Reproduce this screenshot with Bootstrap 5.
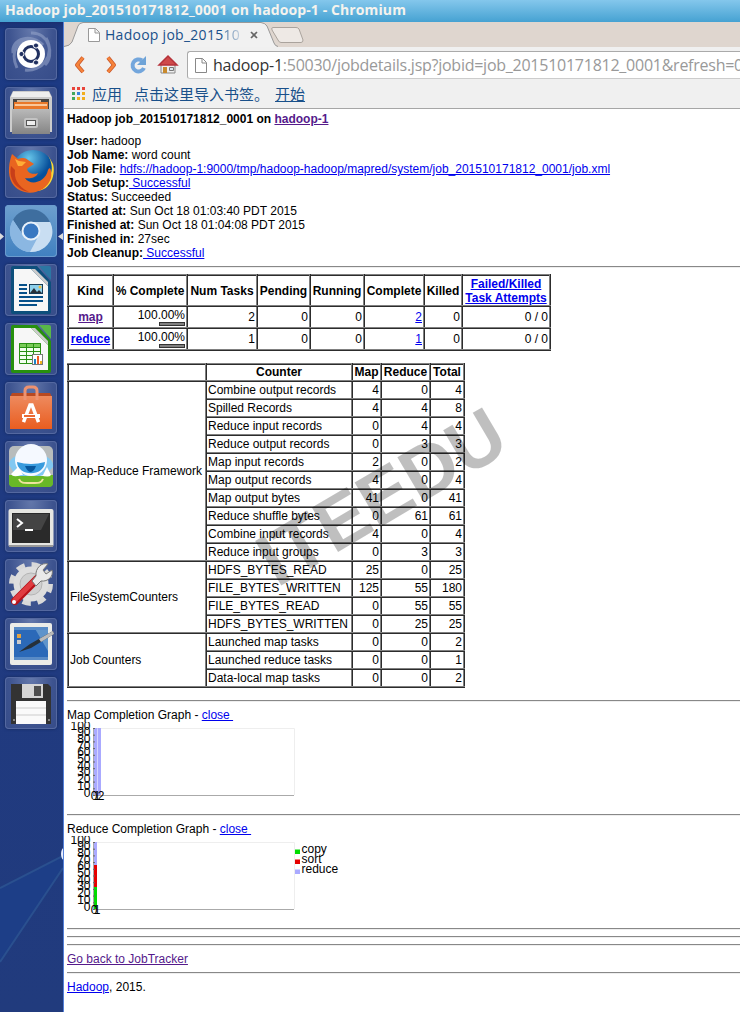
<!DOCTYPE html>
<html lang="en">
<head>
<meta charset="utf-8">
<title>Hadoop job_201510171812_0001 on hadoop-1</title>
<link href="https://cdn.jsdelivr.net/npm/bootstrap@5.3.0/dist/css/bootstrap.min.css" rel="stylesheet">
<style>
body{height:1012px;overflow:hidden;background:#fff;color:#000;font:12px/14px "Liberation Sans",Arial,sans-serif}
.titlebar{height:22px;background:linear-gradient(#84c7ec,#46a2d2);color:#f5f3ee;font:700 14px/20px "Open Sans","Noto Sans",sans-serif;padding-left:5px;white-space:nowrap}
.desktop{height:990px}
.launcher{width:64px;flex:none;background:linear-gradient(#1b2f70 0,#1c3a84 8px,#203a80 600px,#213b7d);border-right:1px solid #5480d8;padding:6px 0 0 5px;position:relative}
.launcher .rays{position:absolute;left:0;top:713px}
.tiles{gap:7px;position:relative}
.tile{width:52px;height:52px;border-radius:4px;background:radial-gradient(ellipse at 50% 0,#6478ab,#3d538f 60%,#364c89);box-shadow:inset 0 0 0 1px #5468a0,0 0 3px #142858}
.tile svg{display:block}
.tile.active{background:linear-gradient(#6d9fce,#4080c0);box-shadow:inset 0 0 0 1px #6b9bce}
.arrows{position:absolute;left:-5px;top:202px}
.tabstrip{height:25px;background:#dfd6cf;position:relative}
.tabshape{position:absolute;left:0;top:0}
.tabtext{position:relative;padding:3px 0 0 41px;font:14px/20px "Open Sans","Noto Sans",sans-serif;color:#19508a;white-space:nowrap}
.tabtext .fade-end{background:linear-gradient(90deg,#3b6b9c,#c3d0de);-webkit-background-clip:text;background-clip:text;color:transparent}
.toolbar{height:36px;background:#f0f0f0;padding-left:10px;position:relative}
.address{height:28px;border:1px solid #aaa;border-bottom-color:#ccc;border-right:0;border-radius:3px 0 0 3px;background:#fff;color:#999;margin-left:8px;font:16px/26px "Open Sans","Noto Sans",sans-serif;white-space:nowrap;overflow:hidden}
.address b{font-weight:400;color:#333}
.bookmarks{height:26px;background:#f0f0f0;border-bottom:1px solid #a6a6a6;color:#19508a;font:15px/21px "Noto Sans CJK SC",sans-serif;padding:0 0 0 7px;white-space:nowrap}
.page-body{padding:3px 0 0 3px;overflow:hidden;flex:1;position:relative}
.page-body a{color:#00e;text-decoration:underline}
.page-body a.seen{color:#551a8b}
.page-body b,.page-body th{font-weight:700}
.rule{height:2px;border-top:1px solid #888;border-bottom:1px solid #eee}
.grid-data{border-collapse:collapse;table-layout:fixed;border:2px outset #808080}
.grid-data td,.grid-data th{border:2px inset #808080;padding:0 1px;white-space:nowrap}
.grid-data th{text-align:center}
.grid-data td.n{text-align:right}
.meter{width:26px;height:4px;border:1px solid #333;background:#808080;margin:0 0 0 auto}
.watermark{position:absolute;left:0;top:0;pointer-events:none}
.chart{display:block}
</style>
<script src="https://cdn.jsdelivr.net/npm/bootstrap@5.3.0/dist/js/bootstrap.bundle.min.js"></script>
</head>
<body>
<div class="titlebar"><span id="wt" style="letter-spacing:0">Hadoop job_201510171812_0001 on hadoop-1 - Chromium</span></div>
<div class="desktop d-flex">
<aside class="launcher">
<svg class="rays" width="63" height="277"><path d="M63 121L0 153V227L63 133Z" fill="#1d3e87"/><path d="M63 121L0 153M63 133L0 227" stroke="#2a508f" stroke-width="2" fill="none"/><ellipse cx="64" cy="119" rx="3" ry="6" fill="#e8eeff"/></svg>
<div class="tiles d-flex flex-column">
<svg class="arrows" width="64" height="14" style="z-index:1"><path d="M0 3L4 6.500L0 10ZM63 3L58 6.500L63 10Z" fill="#ddd"/></svg>
<div class="tile"><svg width="52" height="52"><path d="M26 5C44 4 50 27 40 37M41 10C51 28 36 44 20 42M8 25C6 10 27 5 38 17M12 40C4 22 14 12 26 12" stroke="#92a2c8" stroke-width="3" opacity=".6" fill="none"/><circle cx="26" cy="26" r="14" fill="#fff"/><circle cx="26" cy="26" r="7.500" fill="none" stroke="#203060" stroke-width="3"/><g fill="#203060" stroke="#fff"><circle cx="16.500" cy="26" r="2.600"/><circle cx="31" cy="17.500" r="2.600"/><circle cx="31" cy="34.500" r="2.600"/></g></svg></div>
<div class="tile"><svg width="52" height="52"><defs><linearGradient id="cab" x2="0" y2="1"><stop stop-color="#b9b9b9"/><stop offset="1" stop-color="#858585"/></linearGradient></defs><path d="M8 4H44L47 10V45H5V10Z" fill="#ccc"/><path d="M6 10L8 5H44L46 10Z" fill="#eee"/><path d="M8 12H44V24H8Z" fill="#484644"/><path d="M9 15H43V22H9Z" fill="#e97829"/><path d="M12 14H36M10 18H42" stroke="#ffe1be" stroke-width="1.500"/><path d="M7 22H45V47H7Z" fill="url(#cab)"/><rect x="19" y="31" width="14" height="10" rx="2" fill="#c3c3c3"/><rect x="21.500" y="33.500" width="9" height="5" fill="#eee" stroke="#555"/></svg></div>
<div class="tile"><svg width="52" height="52"><defs><radialGradient id="fx" cx=".4" cy=".2"><stop stop-color="#67c6ea"/><stop offset="1" stop-color="#07509b"/></radialGradient></defs><circle cx="28" cy="25" r="21" fill="url(#fx)"/><path d="M43 9C50 22 47 32 37 36L31 45C46 45 51 28 48 18Z" fill="#fdd835"/><path d="M7 8L13 13C18 11 21 12 23 14L29 18L23 22C20 24 26 30 33 27C30 34 21 32 20 32C25 40 40 37 43 24C46 18 47 29 46 32C41 49 16 52 7 37C2 28 4 16 7 8Z" fill="#e96520"/><path d="M6 20C3 35 13 44 24 46C12 40 9 32 10 24Z" fill="#c83e19"/><path d="M10 13L14 15L21 16L17 20L13 20Z" fill="#ffad36"/></svg></div>
<div class="tile active"><svg width="52" height="52"><circle cx="26" cy="26" r="21" fill="#9bc2e7"/><path d="M8 15C16 0 38 1 45 17H26A9 9 0 0 0 18 30Z" fill="#3e6e9f"/><path d="M8 15A21 21 0 0 0 25 47L33 32C27 38 20 34 18 30Z" fill="#8bb7e2"/><path d="M26 17H45C53 33 40 48 25 47L33 32C38 26 34 18 26 17Z" fill="#c9def2"/><circle cx="26" cy="26" r="8.500" fill="#3978c1" stroke="#e8f1fa" stroke-width="2"/></svg></div>
<div class="tile"><svg width="52" height="52"><path d="M8 2H32L46 18V48Q46 50 44 50H8Q6 50 6 48V4Q6 2 8 2Z" fill="#0d4f7c"/><path d="M9 5H26L43 22V47H9Z" fill="#f7f7f7"/><path d="M26 5L43 22V18L30 5Z" fill="#ccc"/><path d="M34 2L46 16V4Q46 2 44 2Z" fill="#2b76a3"/><path d="M14 21H22M14 25H22M14 29H22M14 33H38M14 37H38M14 41H32" stroke="#07518a" stroke-width="2"/><rect x="24.500" y="20.500" width="13" height="9" fill="#8dd0ec" stroke="#173c57"/><path d="M25 29L29 24L32 28L34 26L37 29Z" fill="#283038"/><circle cx="35" cy="23" r="1.500" fill="#f2bd3e"/></svg></div>
<div class="tile"><svg width="52" height="52"><path d="M8 2H32L46 18V48Q46 50 44 50H8Q6 50 6 48V4Q6 2 8 2Z" fill="#27900e"/><path d="M9 5H26L43 22V47H9Z" fill="#f7f7f7"/><path d="M26 5L43 22V18L30 5Z" fill="#ccc"/><path d="M34 2L46 16V4Q46 2 44 2Z" fill="#58b848"/><path d="M14.500 20.500H35.500V40.500H14.500Z" fill="#f3fff0"/><path d="M14 20H36V24H14Z" fill="#79cb58"/><path d="M14.500 20.500H35.500V40.500H14.500ZM14 24.500H36M14 28.500H36M14 32.500H36M14 36.500H36M21.500 20V41M28.500 20V41" fill="none" stroke="#299114"/><rect x="27.500" y="31.500" width="10" height="10" fill="#fff" stroke="#777"/><path d="M29 36H31V41H29Z" fill="#1c85c7"/><path d="M32 33H34V41H32Z" fill="#f25b25"/><path d="M35 38H37V41H35Z" fill="#f1b31c"/></svg></div>
<div class="tile"><svg width="52" height="52"><defs><linearGradient id="bag" x2="0" y2="1"><stop stop-color="#ee8a5e"/><stop offset="1" stop-color="#e95d20"/></linearGradient></defs><path d="M7 11H45L47 15H5Z" fill="#b84921"/><path d="M5 14H47V47H5Z" fill="url(#bag)"/><path d="M20 18V9Q20 5 24 5H28Q32 5 32 9V18" fill="none" stroke="#ee9270" stroke-width="3"/><path d="M18.500 40L25 23H27L33.500 40" fill="none" stroke="#fff" stroke-width="3.500"/><path d="M17 34H35" stroke="#fff" stroke-width="4"/><path d="M19 34H30" stroke="#ec6932" stroke-width="2"/></svg></div>
<div class="tile"><svg width="52" height="52"><rect x="4" y="5" width="44" height="41" rx="5" fill="#b8bcbc"/><path d="M4 34H48V42Q48 46 44 46H8Q4 46 4 42Z" fill="#68b827"/><path d="M4 24C4 16 13 13 26 13S49 17 48 26L40 35H11Z" fill="#82c8f2"/><ellipse cx="26" cy="19" rx="16" ry="16" fill="#f5f9ff"/><path d="M12 21Q26 25 40 21C39 36 13 36 12 21Z" fill="#399bdd"/><path d="M20 25H31Q29 31 25 31Q22 30 20 25Z" fill="#07579d"/><path d="M6 33L13 26L18 34L38 34L42 26L46 34Q44 37 35 34H16Q8 37 6 33Z" fill="#fff"/><path d="M14 38C16 43 20 42 26 42S36 43 38 38" stroke="#eee49d" stroke-width="2" fill="none"/></svg></div>
<div class="tile"><svg width="52" height="52"><rect x="3.500" y="9" width="45" height="38" rx="2" fill="#e6e6e2"/><path d="M4 46H48" stroke="#999" stroke-width="2"/><rect x="7" y="13" width="38" height="30" fill="#2a2a2a"/><path d="M8 14H44L36 30H8Z" fill="#444"/><path d="M12 19L17 23L12 27M20 30H28" stroke="#fff" stroke-width="2" fill="none"/></svg></div>
<div class="tile"><svg width="52" height="52"><circle cx="26" cy="25" r="18.500" fill="none" stroke="#d9d9d9" stroke-width="7" stroke-dasharray="8 6.530"/><circle cx="26" cy="25" r="17.500" fill="#dedede"/><circle cx="26" cy="25" r="11" fill="#d0d0d0" stroke="#b5b5b5"/><path d="M10 42L32 20" stroke="#b71219" stroke-width="8" stroke-linecap="round"/><path d="M10 41L31 20" stroke="#e03c40" stroke-width="5" stroke-linecap="round"/><path d="M31 17C30 9 37 3 43 5L38 11L41 15L47 11C49 17 43 23 36 22L31 27L27 22Z" fill="#e9e9e9" stroke="#777"/><circle cx="9" cy="43" r="2" fill="#fff"/></svg></div>
<div class="tile"><svg width="52" height="52"><rect x="5" y="5" width="42" height="42" rx="2" fill="#ecece8"/><rect x="9" y="9" width="34" height="33" fill="#2b69b8"/><path d="M29 9H43V33Z" fill="#5f94cb"/><path d="M9 9H43V12H9ZM9 39H43V42H9Z" fill="#598bc6"/><path d="M12 16H16V20H12Z" fill="#e2a344"/><path d="M12 22H16V26H12Z" fill="#ccc"/><path d="M14 34L25 26L48 13L49 16L26 30Z" fill="#26303a"/><path d="M34 21L48 13L49 16L36 24Z" fill="#bbb"/></svg></div>
<div class="tile"><svg width="52" height="52"><path d="M6 7H43L46 10V47H6Z" fill="#333"/><path d="M17 7H38V21H17Z" fill="#d5d5d5"/><path d="M29 9H36V19H29Z" fill="#4e4e4e"/><path d="M11 24H41V47H11Z" fill="#fafafa"/><path d="M11 31H41M11 38H41" stroke="#ccc"/><path d="M8 43H10M43 43H45" stroke="#ddd"/></svg></div>
</div>
</aside>
<main class="flex-grow-1 d-flex flex-column overflow-hidden">
<div class="tabstrip">
<svg class="tabshape" width="250" height="25"><path d="M0 25Q6 24 8 20L14 4Q15 1 19 1H197Q201 1 203 4L210 21Q211 24 214 25Z" fill="#f1f1f1"/><path d="M0 24.500Q6 24 8 20L14 4Q15 1 19 .5H197Q201 1 203 4L210 21Q211 24 214 24.500" fill="none" stroke="#999"/><path d="M209 5.500H232Q234 5.500 235 7L239 18Q239 20.500 237 20.500H217Q215 20.500 214 18L208 8Q207 5.500 209 5.500Z" fill="#eee9e5" stroke="#aaa39d"/><path d="M24.500 6.500H31.500L35.500 10.500V19.500H24.500ZM31 6.500V11H35" fill="#fff" stroke="#999"/><path d="M187 10L193 16M193 10L187 16" stroke="#666" stroke-width="1.700"/></svg>
<div class="tabtext"><span id="tt">Hadoop job_2015<span class="fade-end">10</span></span></div>
</div>
<div class="toolbar d-flex align-items-center">
<svg width="105" height="28" class="flex-shrink-0"><g fill="none" stroke-linejoin="round"><path d="M9 6.500L3 14L9 21" stroke="#c9572b" stroke-width="4"/><path d="M9 6.500L3 14L9 21" stroke="#f6843b" stroke-width="2.500"/><path d="M34 6.500L40 14L34 21" stroke="#c9572b" stroke-width="4"/><path d="M34 6.500L40 14L34 21" stroke="#f6843b" stroke-width="2.500"/><path d="M70 17A6 6 0 1 1 68 9.500" stroke="#73a6dc" stroke-width="4"/></g><path d="M72 5V14H63Z" fill="#6ea3d7"/><path d="M87 14V22H101V14L94 8Z" fill="#eee" stroke="#888"/><path d="M85 14L94 5L103 14Z" fill="#cf4a4a" stroke="#b5323a" stroke-width="1.500"/><path d="M89 16H93V22H89Z" fill="#c98a2c"/><path d="M95.500 16.500H99.500V19.500H95.500Z" fill="#d8e6ee" stroke="#777"/></svg>
<div class="address flex-grow-1"><svg width="25" height="20" class="align-middle" style="margin-top:-4px"><path d="M7.500 3.500H14.500L18.500 7.500V17.500H7.500ZM14 3.500V8H18" fill="#fff" stroke="#888"/></svg><span id="ad"><b>hadoop-1</b>:50030/jobdetails.jsp?jobid=job_201510171812_0001&amp;refresh=0</span></div>
</div>
<div class="bookmarks d-flex"><svg width="14" height="14" class="mt-1 flex-shrink-0"><path d="M1 0H4V3H1ZM6 0H9V3H6ZM11 0H14V3H11Z" fill="#e8443a"/><path d="M1 5H4V8H1Z" fill="#41a85c"/><path d="M6 5H9V8H6Z" fill="#3883dc"/><path d="M11 5H14V8H11ZM6 10H9V13H6ZM11 10H14V13H11Z" fill="#f2ae1e"/><path d="M1 10H4V13H1Z" fill="#41a85c"/></svg><span style="margin-left:7px">应用</span><span style="margin-left:12px">点击这里导入书签。</span><span style="margin-left:6px;text-decoration:underline">开始</span></div>
<section class="page-body">
<div><b>Hadoop job_201510171812_0001 on <a class="seen" href="#">hadoop-1</a></b></div>
<div style="margin-top:8px">
<b>User:</b> hadoop<br><b>Job Name:</b> word count<br><b>Job File:</b> <a href="#">hdfs://hadoop-1:9000/tmp/hadoop-hadoop/mapred/system/job_201510171812_0001/job.xml</a><br><b>Job Setup:</b><a href="#"> Successful</a><br><b>Status:</b> Succeeded<br><b>Started at:</b> Sun Oct 18 01:03:40 PDT 2015<br><b>Finished at:</b> Sun Oct 18 01:04:08 PDT 2015<br><b>Finished in:</b> 27sec<br><b>Job Cleanup:</b><a href="#"> Successful</a></div>
<div class="rule" style="margin-top:6px"></div>
<table class="grid-data" style="width:484px;margin-top:6px">
<colgroup><col style="width:45px"><col style="width:74px"><col style="width:70px"><col style="width:53px"><col style="width:54px"><col style="width:60px"><col style="width:38px"><col></colgroup>
<tr style="height:31px"><th>Kind</th><th>% Complete</th><th>Num Tasks</th><th>Pending</th><th>Running</th><th>Complete</th><th>Killed</th><th><a href="#">Failed/Killed<br>Task Attempts</a></th></tr>
<tr style="height:22px"><th><a class="seen" href="#">map</a></th><td class="n">100.00%<div class="meter"></div></td><td class="n">2</td><td class="n">0</td><td class="n">0</td><td class="n"><a href="#">2</a></td><td class="n">0</td><td class="n">0 / 0</td></tr>
<tr style="height:22px"><th><a href="#">reduce</a></th><td class="n">100.00%<div class="meter"></div></td><td class="n">1</td><td class="n">0</td><td class="n">0</td><td class="n"><a href="#">1</a></td><td class="n">0</td><td class="n">0 / 0</td></tr>
</table>
<table class="grid-data" id="counters" style="width:398px;margin-top:12px">
<colgroup><col style="width:138px"><col style="width:146px"><col style="width:29px"><col style="width:49px"><col></colgroup>
<tr style="height:17px;line-height:13px"><th></th><th>Counter</th><th>Map</th><th>Reduce</th><th>Total</th></tr>
</table>
<div class="rule" style="margin-top:12px"></div>
<div style="margin-top:6px">Map Completion Graph - <a href="#">close&nbsp;</a></div>
<svg class="chart" id="mapChart" width="300" height="86"></svg>
<div class="rule" style="margin-top:6px"></div>
<div style="margin-top:6px">Reduce Completion Graph - <a href="#">close&nbsp;</a></div>
<svg class="chart" id="reduceChart" width="300" height="86"></svg>
<div class="rule" style="margin-top:6px"></div>
<div class="rule" style="margin-top:6px"></div>
<div class="rule" style="margin-top:6px"></div>
<div style="margin-top:6px"><a class="seen" href="#">Go back to JobTracker</a></div>
<div class="rule" style="margin-top:6px"></div>
<div style="margin-top:6px"><a href="#">Hadoop</a>, 2015.</div>
<svg class="watermark" width="676" height="600"><text transform="translate(213 479) rotate(-30.500)" font-size="75" font-weight="700" textLength="273" fill="#000" fill-opacity=".25">ITEEDU</text></svg>
</section>
</main>
</div>
<script>
const groups = [
 ['Map-Reduce Framework', [['Combine output records',4,0,4],['Spilled Records',4,4,8],['Reduce input records',0,4,4],['Reduce output records',0,3,3],['Map input records',2,0,2],['Map output records',4,0,4],['Map output bytes',41,0,41],['Reduce shuffle bytes',0,61,61],['Combine input records',4,0,4],['Reduce input groups',0,3,3]]],
 ['FileSystemCounters', [['HDFS_BYTES_READ',25,0,25],['FILE_BYTES_WRITTEN',125,55,180],['FILE_BYTES_READ',0,55,55],['HDFS_BYTES_WRITTEN',0,25,25]]],
 ['Job Counters', [['Launched map tasks',0,0,2],['Launched reduce tasks',0,0,1],['Data-local map tasks',0,0,2]]]
];
document.getElementById('counters').insertAdjacentHTML('beforeend', groups.map(([name, rows]) =>
  rows.map((r, i) => '<tr style="height:18px">' + (i ? '' : `<td rowspan="${rows.length}">${name}</td>`) +
    `<td>${r[0]}</td>` + r.slice(1).map(v => `<td class="n">${v}</td>`).join('') + '</tr>').join('')).join(''));

// Shared plot frame; bars are [x, y, width, height, colour].
function chart(id, bars, ticks, extra) {
  let s = '<path d="M27 6.500H227.500V73" fill="none" stroke="#eee"/><path d="M26.500 6V73.500H227" fill="none" stroke="#aaa"/>';
  s += bars.map(b => `<rect x="${b[0]}" y="${b[1]}" width="${b[2]}" height="${b[3]}" fill="${b[4]}"/>`).join('');
  for (let i = 0; i <= 10; i++) {
    const y = 74.5 - i * 6.7;
    s += `<text x="23.500" y="${y}" text-anchor="end">${i * 10}</text><path d="M26 ${y - 1}h2" stroke="#666"/>`;
  }
  s += ticks.map(t => `<text x="${t[0]}" y="77.500" text-anchor="middle">${t[1]}</text>`).join('') + (extra || '');
  document.getElementById(id).innerHTML = s;
}
chart('mapChart', [[27,6,3.5,67,'#aaf'],[31,6,3,67,'#aaf']], [[27,0],[30,1],[34,2]]);
chart('reduceChart', [[27,6,3,23,'#aaf'],[27,29,3,22,'#e60000'],[27,51,3,22,'#00dc00']], [[27,0],[30,1]],
  [['copy','#00dc00'],['sort','#e60000'],['reduce','#aaf']].map((l, i) =>
   `<rect x="228" y="${13.5 + i * 10}" width="5" height="4.500" fill="${l[1]}"/><text x="234.500" y="${17 + i * 10}">${l[0]}</text>`).join(''));

// Letter spacing that gives each chrome caption its column width.
[['wt', 401], ['tt', 135], ['ad', 530]].forEach(([id, w]) => {
  const e = document.getElementById(id);
  e.style.letterSpacing = (w - e.getBoundingClientRect().width) / e.textContent.length + 'px';
});
</script>
</body>
</html>
